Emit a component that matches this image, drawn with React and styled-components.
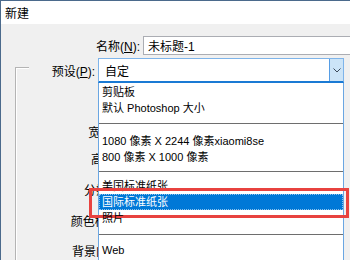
import styled, { createGlobalStyle } from 'styled-components'

const GlobalStyle = createGlobalStyle`
  html, body {
    margin: 0;
    padding: 0;
    background: #f0f0f0;
  }
  body {
    font-family: "Liberation Sans", "Noto Sans CJK SC", sans-serif;
    color: #000;
  }
`

const presets = [
  [{ text: '剪贴板' }, { text: '默认 Photoshop 大小' }],
  [{ text: '1080 像素 X 2244 像素xiaomi8se' }, { text: '800 像素 X 1000 像素' }],
  [{ text: '美国标准纸张' }, { text: '国际标准纸张', selected: true }, { text: '照片' }],
  [{ text: 'Web' }],
]

// spacing above / below each separator line
const gaps = [[7, 9], [6, 6], [8, 7]]

const fields = [
  { name: '宽度', key: 'W', top: 35, width: 109 },
  { name: '高度', key: 'H', top: 1, width: 109 },
  { name: '分辨率', key: 'R', top: 5, width: 114 },
  { name: '颜色模式', key: 'M', top: 5, width: 114 },
  { name: '背景内容', key: 'C', top: 4, width: 114 },
]

const App = () => {
  return (
    <>
      <GlobalStyle />
      <Window>
        <TitleBar>新建</TitleBar>
        <Body>
          <NameRow>
            <Label $width={142}>名称(<u>N</u>):</Label>
            <TextInput>未标题-1</TextInput>
          </NameRow>
          <GroupArea>
            <Frame />
            <GroupContent>
              <PresetRow>
                <Label $width={69}>预设(<u>P</u>):</Label>
                <Combo>
                  <ComboText>自定</ComboText>
                  <ArrowButton>
                    <svg width="8" height="5" viewBox="0 0 8 5">
                      <polyline points="0.5,0.5 4,4 7.5,0.5" fill="none" stroke="#3c4a5a" strokeWidth="1" />
                    </svg>
                  </ArrowButton>
                  <DropList>
                    {presets.map((group, gi) => (
                      <div key={gi}>
                        {gi > 0 && <Separator $above={gaps[gi - 1][0]} $below={gaps[gi - 1][1]} />}
                        {group.map(item => (
                          <ListItem key={item.text} $selected={item.selected}>
                            {item.text}
                            {item.selected && <RedMark />}
                          </ListItem>
                        ))}
                      </div>
                    ))}
                  </DropList>
                </Combo>
              </PresetRow>
              {fields.map(f => (
                <FieldRow key={f.key} $top={f.top}>
                  <Label $width={f.width}>{f.name}(<u>{f.key}</u>):</Label>
                </FieldRow>
              ))}
            </GroupContent>
          </GroupArea>
        </Body>
      </Window>
    </>
  )
}

const Window = styled.div`
  width: 350px;
  height: 260px;
  box-sizing: border-box;
  border-left: 1px solid #4b6a8c;
  border-top: 1px solid #4b6a8c;
  background: #f0f0f0;
  overflow: hidden;
  display: flex;
  flex-direction: column;
`

const TitleBar = styled.div`
  height: 23px;
  flex-shrink: 0;
  background: #fff;
  display: flex;
  align-items: center;
  padding-left: 4px;
  font-size: 12px;
`

const Body = styled.div`
  flex: 1;
  padding-top: 12px;
  font-size: 12px;
`

const NameRow = styled.div`
  display: flex;
  align-items: center;
  height: 19px;
`

const Label = styled.div`
  width: ${props => props.$width}px;
  flex-shrink: 0;
  box-sizing: border-box;
  padding-right: 3px;
  text-align: right;
  white-space: nowrap;
  font-size: 12px;
`

const TextInput = styled.div`
  flex: 1;
  height: 19px;
  box-sizing: border-box;
  border: 1px solid #abadb3;
  border-right: none;
  background: #fff;
  padding-left: 4px;
  display: flex;
  align-items: center;
  font-size: 12px;
`

const GroupArea = styled.div`
  display: flex;
  margin: 3px 0 0 14px;
`

const Frame = styled.div`
  width: 13px;
  flex-shrink: 0;
  margin-top: 9px;
  border-left: 1px solid #b4b4b4;
  border-top: 1px solid #b4b4b4;
  box-shadow: inset 1px 1px 0 #fff;
`

const GroupContent = styled.div`
  flex: 1;
  display: flex;
  flex-direction: column;
`

const PresetRow = styled.div`
  display: flex;
  align-items: center;
  height: 25px;
`

const Combo = styled.div`
  position: relative;
  width: 246px;
  height: 25px;
  box-sizing: border-box;
  border: 1px solid #7eb4ea;
  border-bottom: 2px solid #1a7ad4;
  background: #fff;
  display: flex;
  align-items: center;
  z-index: 2;
`

const ComboText = styled.span`
  flex: 1;
  padding-left: 6px;
  font-size: 12px;
`

const ArrowButton = styled.div`
  width: 13px;
  align-self: stretch;
  background: #cce4f7;
  border-left: 1px solid #569de5;
  display: flex;
  align-items: center;
  justify-content: center;
`

const DropList = styled.div`
  position: absolute;
  top: calc(100% + 2px);
  left: -1px;
  width: 246px;
  height: 190px;
  box-sizing: border-box;
  padding-top: 1px;
  background: #fff;
  border-left: 1px solid #6aa6e2;
  border-right: 1px solid #6aa6e2;
`

const Separator = styled.div`
  height: 1px;
  background: #6e6e6e;
  margin: ${props => props.$above}px 0 ${props => props.$below}px;
`

const ListItem = styled.div`
  position: relative;
  height: 16px;
  line-height: 16px;
  padding-left: 3px;
  font-size: 11px;
  white-space: nowrap;
  color: ${props => (props.$selected ? '#fff' : '#000')};
  background: ${props => (props.$selected ? '#0078d7' : 'transparent')};
  outline: ${props => (props.$selected ? '1px dotted rgba(255, 255, 255, 0.55)' : 'none')};
  outline-offset: -1px;
`

const RedMark = styled.span`
  position: absolute;
  left: -10px;
  right: -6px;
  top: -6px;
  bottom: -8px;
  border: 3px solid #e8423f;
  pointer-events: none;
`

const FieldRow = styled.div`
  display: flex;
  align-items: center;
  height: 26px;
  margin-top: ${props => props.$top}px;
`

export default App
